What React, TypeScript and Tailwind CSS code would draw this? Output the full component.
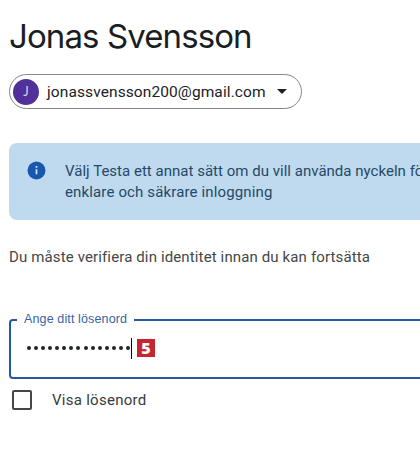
import type { JSX } from "react";

const PASSWORD_LENGTH = 15;

function AccountChip(): JSX.Element {
	return (
		<button className="mt-[18px] flex h-[35px] w-[293px] items-center rounded-full border border-[#858786] pl-[3px] text-[#1c2126]">
			<span className="flex size-[26px] shrink-0 items-center justify-center rounded-full bg-[#51309a] text-[13px] text-[#d9cef0] [font-family:Lato,sans-serif]">
				J
			</span>
			<span className="ml-[8px] w-[219px] whitespace-nowrap text-left text-[15.5px] leading-5 tracking-[0.1px] [font-family:Roboto,sans-serif]">
				jonassvensson200@gmail.com
			</span>
			<svg className="ml-[11px] h-[5px] w-[10px]" viewBox="0 0 10 5" fill="currentColor">
				<path d="M0 0h10L5 5z" />
			</svg>
		</button>
	);
}

function Notice(): JSX.Element {
	return (
		<section className="mt-[34px] flex h-[77px] w-[411px] rounded-l-lg bg-[#bfd9ef] pl-[18px] pt-[18px] text-[#254a66]">
			<svg className="size-[19px] shrink-0" viewBox="0 0 19 19">
				<circle cx="9.5" cy="9.5" r="9" fill="#1957ac" />
				<path d="M9.5 8.3v5M9.5 5v1.7" stroke="#d4e6f7" strokeWidth="1.7" />
			</svg>
			<p className="ml-[19px] whitespace-nowrap text-[15px] leading-[21px]">
				<span className="tracking-[0.02px]">Välj Testa ett annat sätt om du vill använda nyckeln fö</span>
				<br />
				<span className="tracking-[0.14px]">enklare och säkrare inloggning</span>
			</p>
		</section>
	);
}

function PasswordField(): JSX.Element {
	return (
		<fieldset className="mt-[44px] h-[67px] w-[440px] rounded-[4px] border-2 border-[#2458a3] pl-[6px]">
			<legend className="h-[15px] whitespace-nowrap px-[7px] text-[12.5px] leading-[15px] tracking-[0.13px] text-[#3963a6] [font-family:'Liberation_Sans',sans-serif]">
				Ange ditt lösenord
			</legend>
			<div className="mt-[10px] flex h-[22px] items-center pl-[10px]">
				<div className="flex w-[104px] items-center justify-between pr-[1px]">
					{Array.from({ length: PASSWORD_LENGTH }, (_, index) => (
						<span key={index} className="size-[4px] rounded-full bg-[#20242a]" />
					))}
				</div>
				<span className="h-[21px] w-px bg-black" />
				<span className="ml-[5px] flex h-[18px] w-[18px] items-center justify-center bg-[#c5262e] text-[16px] font-extrabold leading-none text-white [font-family:'Open_Sans',sans-serif]">
					5
				</span>
			</div>
		</fieldset>
	);
}

function App(): JSX.Element {
	return (
		<main className="h-[453px] w-[420px] overflow-hidden bg-white pl-[9px] pt-[14px] [font-family:Roboto,sans-serif]">
			<h1 className="h-[42px] whitespace-nowrap text-[33px] font-normal leading-[44px] tracking-[-0.9px] text-[#191e24] [font-family:Inter,sans-serif]">
				Jonas Svensson
			</h1>
			<AccountChip />
			<Notice />
			<p className="mt-[26px] h-[22px] whitespace-nowrap text-[15px] leading-[22px] tracking-[0.13px] text-[#444746]">
				Du måste verifiera din identitet innan du kan fortsätta
			</p>
			<PasswordField />
			<label className="mt-[11px] flex h-[20px] items-center pl-[3px] text-[15px] tracking-[0.27px] text-[#363b3d]">
				<input type="checkbox" className="size-[20px] appearance-none rounded-[2px] border-2 border-[#444746]" />
				<span className="ml-[20px] whitespace-nowrap leading-5">Visa lösenord</span>
			</label>
		</main>
	);
}

export default App;
